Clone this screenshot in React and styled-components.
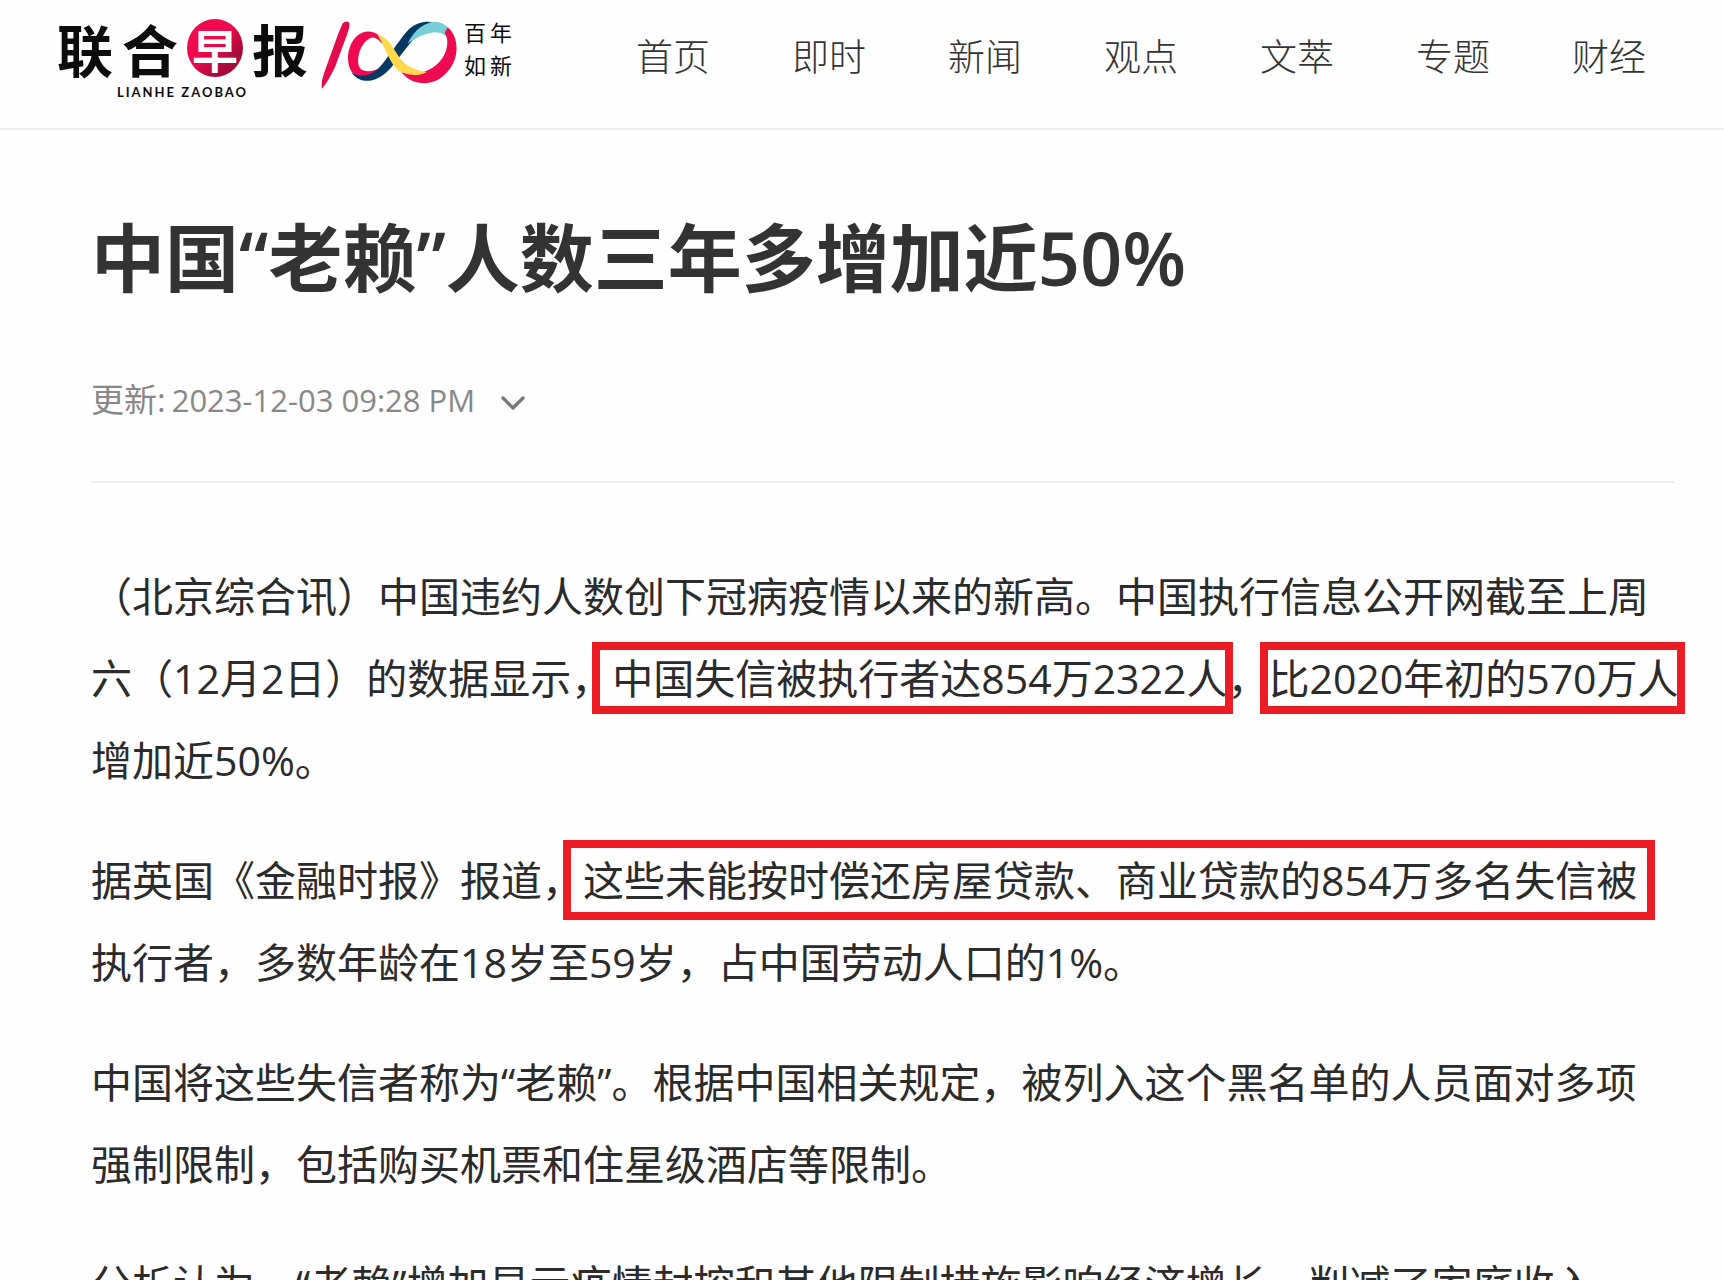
import styled, { createGlobalStyle } from "styled-components";
import { FiChevronDown } from "react-icons/fi";

const GlobalStyle = createGlobalStyle`
  * {
    box-sizing: border-box;
  }

  body {
    margin: 0;
    background-color: #fefefe;
    color: #2b2b2b;
    font-family: "Open Sans", "Noto Sans CJK SC", sans-serif;
  }
`;

const Page = styled.div`
  height: 100vh;
  overflow: hidden;
`;

const Header = styled.header`
  display: flex;
  align-items: center;
  height: 130px;
  padding: 0 57px 14px;
  border-bottom: 2px solid #eeeeee;
`;

const LogoLink = styled.a`
  display: flex;
  align-items: center;
  flex-shrink: 0;
  color: #0c0c0c;
  text-decoration: none;
`;

const Brand = styled.div`
  display: flex;
  flex-direction: column;
  align-items: center;
  margin-right: 12px;
  padding-top: 4px;
`;

const BrandName = styled.div`
  display: flex;
  gap: 9px;
`;

const BrandChar = styled.span`
  display: flex;
  align-items: center;
  justify-content: center;
  width: 56px;
  height: 58px;
  border-radius: 50%;
  font-family: "Noto Sans CJK SC", sans-serif;
  font-size: ${(props) => (props.$seal ? "46px" : "56px")};
  font-weight: 700;
  line-height: 58px;
  color: ${(props) => (props.$seal ? "#fff" : "inherit")};
  background: ${(props) =>
    props.$seal ? "linear-gradient(135deg, #ee0a4c 45%, #a80a3c 75%)" : "none"};
`;

const BrandLatin = styled.span`
  margin-top: 8px;
  font-family: Lato, sans-serif;
  font-size: 13px;
  font-weight: 700;
  letter-spacing: 2px;
  line-height: 14px;
`;

const Motto = styled.div`
  display: grid;
  margin-left: 4px;
  padding-bottom: 18px;
  font-family: "Noto Sans CJK SC", sans-serif;
  font-size: 22px;
  font-weight: 400;
  letter-spacing: 4px;
  line-height: 33px;
`;

const Nav = styled.nav`
  margin-left: 120px;
`;

const NavList = styled.ul`
  display: flex;
  gap: 82px;
  margin: 0;
  padding: 0;

  li {
    list-style: none;
  }

  a {
    color: #333;
    font-size: 37px;
    font-weight: 300;
    line-height: 48px;
    text-decoration: none;
    white-space: nowrap;
  }
`;

const Article = styled.article`
  padding: 80px 50px 0 91px;
`;

const Title = styled.h1`
  margin: 0;
  color: #333;
  font-size: 74px;
  font-weight: 600;
  line-height: 96px;
`;

const Meta = styled.div`
  display: flex;
  align-items: center;
  margin-top: 70px;
  padding-bottom: 57px;
  border-bottom: 2px solid #eeeeee;
  color: #888;
  font-size: 33px;
  line-height: 48px;
`;

const Time = styled.time`
  margin-left: 6px;
  font-size: 31px;
`;

const ToggleButton = styled.button`
  display: flex;
  margin-left: 18px;
  padding: 6px 0 0;
  border: none;
  background: none;
  color: #777;
  cursor: pointer;
`;

const Content = styled.div`
  margin-top: 72px;
  font-size: 41px;
  line-height: 82px;

  p {
    margin: 0 0 38px;
    white-space: nowrap;
  }
`;

// red frame drawn over the text, like a marker on a printout
const Mark = styled.mark`
  position: relative;
  background: none;
  color: inherit;

  &::after {
    content: "";
    position: absolute;
    top: ${(props) => (props.$tall ? "-12px" : "-8px")};
    right: ${(props) => (props.$tall ? "-18px" : "-6px")};
    bottom: ${(props) => (props.$tall ? "-12px" : "-8px")};
    left: ${(props) => (props.$tight ? "-8px" : "-20px")};
    border: 8px solid #ec1c24;
  }
`;

const links = ["首页", "即时", "新闻", "观点", "文萃", "专题", "财经"];

const HundredLogo = () => (
  <svg width="140" height="72" viewBox="60 60 420 215" aria-hidden="true">
    <path
      fill="#e30b4d"
      d="M128 66 Q139 56 148 65 Q150 74 142 98 L106 195 Q88 235 66 263 Q62 245 72 216 L115 97 Z"
    />
    <path
      fill="#ee0a50"
      d="M243 106 C224 91 205 88 188 94 C158 105 142 145 144 175 C146 207 160 226 184 228 C212 228 230 215 244 198 C225 208 206 213 191 208 C175 202 172 185 176 162 C182 134 198 114 217 109 C230 109 238 118 248 130 Z"
    />
    <path
      fill="#073763"
      d="M154 213 C168 234 190 242 214 238 C249 229 268 207 286 184 C306 157 334 119 352 102 C367 88 387 75 400 64 C380 58 350 63 328 83 C308 103 286 138 266 163 C246 193 228 213 205 221 C185 226 168 222 154 213 Z"
    />
    <path
      fill="#76ced6"
      d="M323 127 C343 85 375 64 405 62 C425 63 438 72 447 84 L440 108 C425 92 405 91 387 96 C362 102 345 112 323 127 Z"
    />
    <path
      fill="#ee0a50"
      d="M443 78 C465 95 474 130 468 160 C460 205 420 245 375 246 C345 246 322 235 302 210 C328 220 350 220 370 213 C408 200 436 170 441 135 C444 118 441 108 434 95 Z"
    />
    <path
      fill="#ffd84d"
      d="M231 98 C262 110 276 133 289 155 C306 185 332 207 380 213 C350 227 318 222 296 209 C271 190 261 150 231 98 Z"
    />
  </svg>
);

const Logo = () => (
  <LogoLink href="#">
    <Brand>
      <BrandName>
        <BrandChar>联</BrandChar>
        <BrandChar>合</BrandChar>
        <BrandChar $seal>早</BrandChar>
        <BrandChar>报</BrandChar>
      </BrandName>
      <BrandLatin>LIANHE ZAOBAO</BrandLatin>
    </Brand>
    <HundredLogo />
    <Motto>
      <span>百年</span>
      <span>如新</span>
    </Motto>
  </LogoLink>
);

const App = () => {
  return (
    <Page lang="zh-CN">
      <GlobalStyle />
      <Header>
        <Logo />
        <Nav>
          <NavList>
            {links.map((link) => (
              <li key={link}>
                <a href="#">{link}</a>
              </li>
            ))}
          </NavList>
        </Nav>
      </Header>

      <Article>
        <Title>中国“老赖”人数三年多增加近50%</Title>
        <Meta>
          <span>更新:</span>
          <Time dateTime="2023-12-03T21:28">2023-12-03 09:28 PM</Time>
          <ToggleButton aria-label="展开">
            <FiChevronDown size={40} strokeWidth={2} />
          </ToggleButton>
        </Meta>

        <Content>
          <p>
            （北京综合讯）中国违约人数创下冠病疫情以来的新高。中国执行信息公开网截至上周
            <br />
            六（12月2日）的数据显示，
            <Mark>中国失信被执行者达854万2322人</Mark>，
            <Mark $tight>比2020年初的570万人</Mark>
            <br />
            增加近50%。
          </p>
          <p>
            据英国《金融时报》报道，
            <Mark $tall>这些未能按时偿还房屋贷款、商业贷款的854万多名失信被</Mark>
            <br />
            执行者，多数年龄在18岁至59岁，占中国劳动人口的1%。
          </p>
          <p>
            中国将这些失信者称为“老赖”。根据中国相关规定，被列入这个黑名单的人员面对多项
            <br />
            强制限制，包括购买机票和住星级酒店等限制。
          </p>
          <p>分析认为，“老赖”增加显示疫情封控和其他限制措施影响经济增长，削减了家庭收入，</p>
        </Content>
      </Article>
    </Page>
  );
};

export default App;
